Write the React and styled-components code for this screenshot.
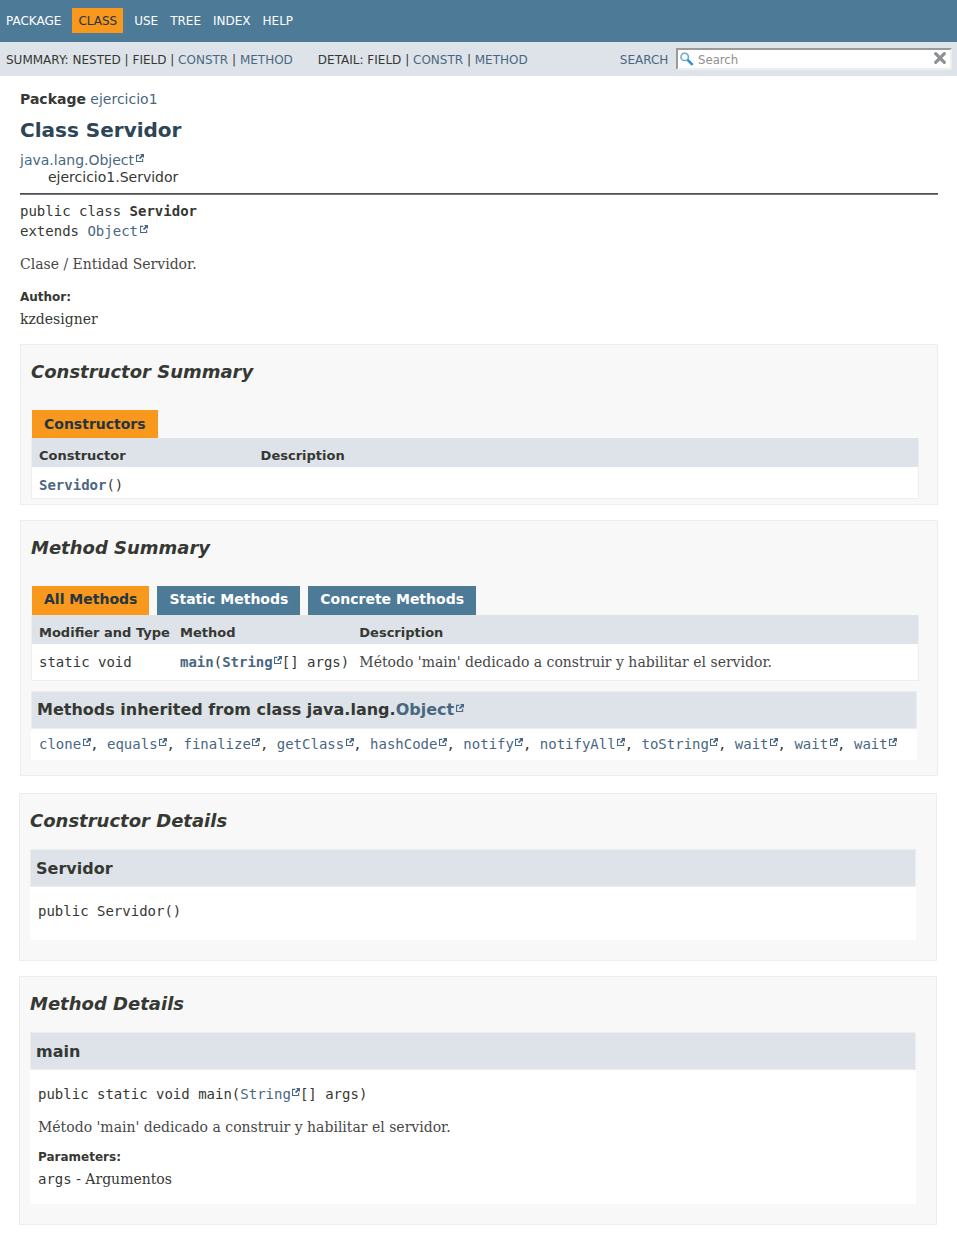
import React from 'react';
import styled, { createGlobalStyle, css } from 'styled-components';

const SANS = "'DejaVu Sans', Arial, Helvetica, sans-serif";
const MONO = "'DejaVu Sans Mono', monospace";
const SERIF = "'DejaVu Serif', Georgia, serif";

const Global = createGlobalStyle`
  body { margin: 0; background: #fff; color: #353833; font: 14px ${SANS}; }
  * { box-sizing: border-box; }
  h1, h2, h3, p, ul, dl, dd, dt { margin: 0; padding: 0; }
`;

const Anchor = styled.a`
  color: #4a6782;
  text-decoration: none;
  font-weight: ${p => (p.$bold ? 'bold' : 'inherit')};
`;

const ExtIcon = styled.svg`
  display: inline-block;
  width: 8px;
  height: 8px;
  margin: 0 -0.5px 3px 1.5px;
  vertical-align: baseline;
`;

const Ext = ({ children, bold }) => (
  <Anchor href="#" $bold={bold}>
    {children}
    <ExtIcon viewBox="0 0 768 768" fill="#4a6782">
      <path d="M584 664H104V184h216V80H0v688h688V448H584zM384 0l132 132-240 240 120 120 240-240 132 132V0z" />
    </ExtIcon>
  </Anchor>
);

const TopNav = styled.ul`
  display: flex;
  height: 42px;
  padding-top: 8px;
  background: #4d7a97;
  color: #fff;
  font-size: 12px;
  list-style: none;
`;

const NavItem = styled.li`
  height: 25px;
  padding: 6px 6px 4px;
  line-height: 15px;
  ${p => p.$active && css`
    margin: 0 5px;
    background: #f8981d;
    color: #253441;
  `}
`;

const SubNav = styled.div`
  display: flex;
  align-items: center;
  height: 34px;
  padding: 0 5px 0 6px;
  background: #dee3e9;
  font-size: 12px;
  line-height: 14px;
`;

const SubList = styled.div`
  margin-right: 25px;
  padding-top: 2px;
  white-space: pre;
`;

const SearchLabel = styled.label`
  margin: 2px 7.6px 0 auto;
  color: #4a6782;
`;

const SearchBox = styled.div`
  display: flex;
  align-items: center;
  width: 276px;
  height: 22px;
  padding: 0 4px 0 2px;
  border: 2px solid;
  border-color: #9a9a9a #eeeeee #eeeeee #9a9a9a;
  background: #fff;
`;

const SearchText = styled.span`
  flex: 1;
  margin: 1px 0 0 4px;
  color: #909090;
  font: 13px/16px 'DejaVu Sans Condensed', 'DejaVu Sans', sans-serif;
`;

const ClearIcon = styled.svg`
  margin-bottom: 2px;
`;

const Main = styled.main`
  padding: 14px 19px 0 20px;
`;

const PackageLine = styled.div`
  line-height: 18px;
`;

const Title = styled.h1`
  margin-top: 10px;
  color: #2c4557;
  font-size: 20px;
  line-height: 24px;
`;

const Inheritance = styled.div`
  margin-top: ${p => (p.$nested ? 0 : '10px')};
  padding-left: ${p => (p.$nested ? '28px' : 0)};
  line-height: 17px;
`;

const Rule = styled.hr`
  height: 2px;
  margin: 7px 0 0;
  border: 0;
  border-top: 1px solid #4d4f51;
  background: #77797b;
`;

const Signature = styled.div`
  margin-top: ${p => p.$top}px;
  font: 14px/20px ${MONO};
`;

const Prose = styled.div`
  margin-top: ${p => p.$top || 0}px;
  color: #474747;
  font: 14px/17px ${SERIF};
`;

const NoteTitle = styled.dt`
  margin-top: ${p => p.$top}px;
  font-size: 12px;
  font-weight: bold;
  line-height: 14px;
`;

const NoteText = styled.dd`
  margin-top: 7px;
  font: 14px/17px ${SERIF};
`;

const Code = styled.code`
  font: 14px/17px ${MONO};
`;

const Section = styled.section`
  height: ${p => p.$height}px;
  margin-top: ${p => p.$top}px;
  ${p => p.$shift && 'margin-left: -1px; margin-right: 1px;'}
  padding: 16px ${p => (p.$shift ? 20 : 18)}px 0 10px;
  border: 1px solid #ededed;
  background: #f8f8f8;
`;

const SectionTitle = styled.h2`
  font-size: 18px;
  font-style: italic;
  line-height: 22px;
`;

const Tabs = styled.div`
  display: flex;
  gap: 8px;
  margin: 27px 0 0 1px;
`;

const Tab = styled.div`
  height: ${p => p.$height}px;
  padding: ${p => p.$pad}px 12px 0;
  background: ${p => (p.$active ? '#f8981d' : '#4d7a97')};
  color: ${p => (p.$active ? '#253441' : '#fff')};
  font-weight: bold;
  line-height: 17px;
`;

const Table = styled.div`
  display: grid;
  grid-template-columns: ${p => p.$columns};
  border: 1px solid #eee;
  border-top: 0;
  background: #fff;
`;

const HeadCell = styled.div`
  height: 29px;
  padding: 10px 0 0 7px;
  background: #dee3e9;
  font-size: 13px;
  font-weight: bold;
  line-height: 16px;
  white-space: nowrap;
`;

const Cell = styled.div`
  height: ${p => p.$height}px;
  padding: ${p => p.$pad}px 0 0 ${p => p.$left ?? 7}px;
  font: 14px/17px ${MONO};
  white-space: nowrap;
`;

const Panel = styled.div`
  margin: ${p => p.$top}px ${p => p.$right || 0}px 0 0;
  height: ${p => p.$height}px;
  background: #fff;
`;

const PanelTitle = styled.h3`
  height: 38px;
  padding: ${p => p.$pad ?? 9}px 5px 0;
  border: 1px solid #ededed;
  background: #dee3e9;
  font-size: 16px;
  line-height: 19px;
`;

const PanelBody = styled.div`
  padding-left: 8px;
`;

const inherited = ['clone', 'equals', 'finalize', 'getClass', 'hashCode', 'notify', 'notifyAll', 'toString', 'wait', 'wait', 'wait'];

export default function App() {
  return (
    <>
      <Global />
      <TopNav>
        <NavItem>PACKAGE</NavItem>
        <NavItem $active>CLASS</NavItem>
        <NavItem>USE</NavItem>
        <NavItem>TREE</NavItem>
        <NavItem>INDEX</NavItem>
        <NavItem>HELP</NavItem>
      </TopNav>
      <SubNav>
        <SubList>
          SUMMARY: NESTED | FIELD | <Anchor href="#">CONSTR</Anchor> | <Anchor href="#">METHOD</Anchor>
        </SubList>
        <SubList>
          DETAIL: FIELD | <Anchor href="#">CONSTR</Anchor> | <Anchor href="#">METHOD</Anchor>
        </SubList>
        <SearchLabel>SEARCH</SearchLabel>
        <SearchBox>
          <svg width="14" height="14" viewBox="0 0 14 14" fill="none">
            <circle cx="4.7" cy="4.9" r="3.7" stroke="#62a9c8" strokeWidth="1.5" />
            <path d="M7.6 7.8l5 5" stroke="#2f8fd0" strokeWidth="2.5" />
          </svg>
          <SearchText>Search</SearchText>
          <ClearIcon width="12" height="12" viewBox="0 0 12 12" fill="none">
            <path d="M1.7 1.7l8.6 8.6M10.3 1.7l-8.6 8.6" stroke="#8c9092" strokeWidth="3.2" strokeLinecap="round" />
          </ClearIcon>
        </SearchBox>
      </SubNav>
      <Main>
        <PackageLine>
          <b>Package</b> <Anchor href="#">ejercicio1</Anchor>
        </PackageLine>
        <Title>Class Servidor</Title>
        <Inheritance><Ext>java.lang.Object</Ext></Inheritance>
        <Inheritance $nested>ejercicio1.Servidor</Inheritance>
        <Rule />
        <Signature $top={6}>
          public class <b>Servidor</b><br />
          extends <Ext>Object</Ext>
        </Signature>
        <Prose $top={15}>Clase / Entidad Servidor.</Prose>
        <dl>
          <NoteTitle $top={17}>Author:</NoteTitle>
          <NoteText>kzdesigner</NoteText>
        </dl>

        <Section $top={16} $height={161}>
          <SectionTitle>Constructor Summary</SectionTitle>
          <Tabs>
            <Tab $active $height={28} $pad={6}>Constructors</Tab>
          </Tabs>
          <Table $columns="221.6px 1fr">
            <HeadCell>Constructor</HeadCell>
            <HeadCell>Description</HeadCell>
            <Cell $height={31} $pad={10}><Anchor href="#" $bold>Servidor</Anchor>()</Cell>
            <Cell $height={31} />
          </Table>
        </Section>

        <Section $top={15} $height={256}>
          <SectionTitle>Method Summary</SectionTitle>
          <Tabs>
            <Tab $active $height={29} $pad={5}>All Methods</Tab>
            <Tab $height={29} $pad={5}>Static Methods</Tab>
            <Tab $height={29} $pad={5}>Concrete Methods</Tab>
          </Tabs>
          <Table $columns="141px 179.3px 1fr">
            <HeadCell>Modifier and Type</HeadCell>
            <HeadCell>Method</HeadCell>
            <HeadCell>Description</HeadCell>
            <Cell $height={36} $pad={10}>static void</Cell>
            <Cell $height={36} $pad={10}>
              <Anchor href="#" $bold>main</Anchor>(<Ext bold>String</Ext>[] args)
            </Cell>
            <Cell $height={36} $pad={10}><Prose>Método 'main' dedicado a construir y habilitar el servidor.</Prose></Cell>
          </Table>
          <Panel $top={10} $right={2} $height={69}>
            <PanelTitle $pad={8}>Methods inherited from class java.lang.<Ext>Object</Ext></PanelTitle>
            <Cell $height={31} $pad={7} $left={8}>
              {inherited.map((name, i) => (
                <React.Fragment key={i}>{i > 0 && ', '}<Ext>{name}</Ext></React.Fragment>
              ))}
            </Cell>
          </Panel>
        </Section>

        <Section $shift $top={17} $height={168}>
          <SectionTitle>Constructor Details</SectionTitle>
          <Panel $top={17} $height={91}>
            <PanelTitle>Servidor</PanelTitle>
            <PanelBody>
              <Signature $top={14}>public Servidor()</Signature>
            </PanelBody>
          </Panel>
        </Section>

        <Section $shift $top={15} $height={249}>
          <SectionTitle>Method Details</SectionTitle>
          <Panel $top={17} $height={172}>
            <PanelTitle>main</PanelTitle>
            <PanelBody>
              <Signature $top={14}>public static void main(<Ext>String</Ext>[] args)</Signature>
              <Prose $top={15}>Método 'main' dedicado a construir y habilitar el servidor.</Prose>
              <dl>
                <NoteTitle $top={14}>Parameters:</NoteTitle>
                <NoteText><Code>args</Code> - Argumentos</NoteText>
              </dl>
            </PanelBody>
          </Panel>
        </Section>
      </Main>
    </>
  );
}
